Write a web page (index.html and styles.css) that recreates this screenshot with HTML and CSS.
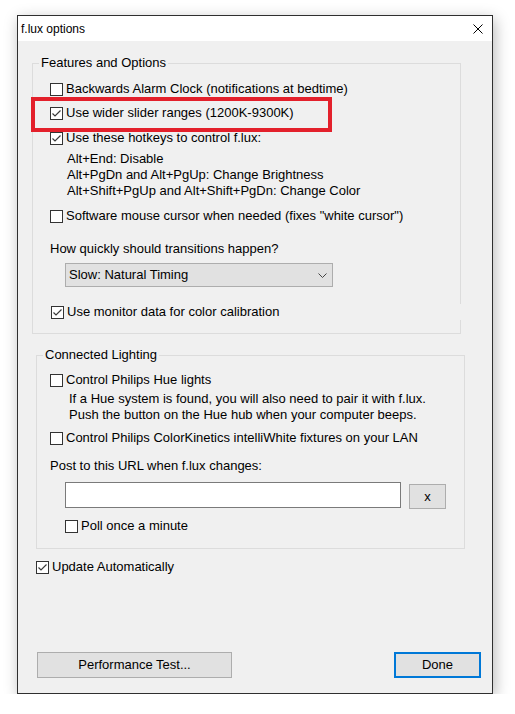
FILE: index.html
```html
<!DOCTYPE html>
<html lang="en">
<head>
    <meta charset="UTF-8">
    <meta name="viewport" content="width=device-width, initial-scale=1.0">
    <title>f.lux options</title>
    <link rel="stylesheet" href="styles.css">
</head>
<body>
    <div class="window">
        <div class="titlebar">
            <span class="title">f.lux options</span>
            <svg class="close" width="10" height="10" viewBox="0 0 10 10">
                <path d="M0.5 0.5 L9.5 9.5 M9.5 0.5 L0.5 9.5" stroke="#000" stroke-width="1" fill="none"/>
            </svg>
        </div>

        <div class="client">
            <!-- Features group -->
            <fieldset class="group group-features">
                <legend>Features and Options</legend>
                <div class="group-body features-body">
                    <label class="check row-alarm"><span class="box"></span>Backwards Alarm Clock (notifications at bedtime)</label>
                    <label class="check row-wider">
                        <span class="box"><svg viewBox="0 0 11 11"><path d="M1.5 5.5 L4 8 L9.5 2.5"/></svg></span>Use wider slider ranges (1200K-9300K)
                        <span class="highlight"></span>
                    </label>
                    <label class="check row-hotkeys"><span class="box"><svg viewBox="0 0 11 11"><path d="M1.5 5.5 L4 8 L9.5 2.5"/></svg></span>Use these hotkeys to control f.lux:</label>
                    <div class="hotkeys">
                        <div>Alt+End: Disable</div>
                        <div>Alt+PgDn and Alt+PgUp: Change Brightness</div>
                        <div>Alt+Shift+PgUp and Alt+Shift+PgDn: Change Color</div>
                    </div>
                    <label class="check row-cursor"><span class="box"></span>Software mouse cursor when needed (fixes "white cursor")</label>
                    <div class="caption row-speed">How quickly should transitions happen?</div>
                    <div class="select">
                        <span>Slow: Natural Timing</span>
                        <svg width="9" height="5" viewBox="0 0 9 5"><path d="M0.5 0.5 L4.5 4.5 L8.5 0.5" stroke="#444" stroke-width="1" fill="none"/></svg>
                    </div>
                    <label class="check row-monitor"><span class="box"><svg viewBox="0 0 11 11"><path d="M1.5 5.5 L4 8 L9.5 2.5"/></svg></span>Use monitor data for color calibration</label>
                </div>
            </fieldset>

            <!-- Lighting group -->
            <fieldset class="group group-lighting">
                <legend>Connected Lighting</legend>
                <div class="group-body lighting-body">
                    <label class="check"><span class="box"></span>Control Philips Hue lights</label>
                    <div class="hue-note">
                        <div>If a Hue system is found, you will also need to pair it with f.lux.</div>
                        <div>Push the button on the Hue hub when your computer beeps.</div>
                    </div>
                    <label class="check row-kinetics"><span class="box"></span>Control Philips ColorKinetics intelliWhite fixtures on your LAN</label>
                    <div class="caption row-url">Post to this URL when f.lux changes:</div>
                    <div class="url-row">
                        <div class="textbox"></div>
                        <div class="btn btn-clear">x</div>
                    </div>
                    <label class="check row-poll"><span class="box"></span>Poll once a minute</label>
                </div>
            </fieldset>

            <label class="check row-update"><span class="box"><svg viewBox="0 0 11 11"><path d="M1.5 5.5 L4 8 L9.5 2.5"/></svg></span>Update Automatically</label>

            <div class="footer">
                <div class="btn btn-perf">Performance Test...</div>
                <div class="btn btn-done">Done</div>
            </div>
        </div>
    </div>
</body>
</html>
```

FILE: styles.css
```css
body {
    margin: 0;
    background-color: #ffffff;
    font-family: 'Liberation Sans', Arial, sans-serif;
    font-size: 13px;
    line-height: 16px;
    color: #000000;
}
.window {
    margin: 15px 0 0 17px;
    width: 476px;
    height: 679px;
    box-sizing: border-box;
    border: 1px solid #2f2f2f;
    background-color: #f0f0f0;
    box-shadow: 2px 4px 14px rgba(0, 0, 0, 0.28);
    display: flex;
    flex-direction: column;
}
.titlebar {
    height: 25px;
    flex: none;
    background-color: #ffffff;
    display: flex;
    align-items: center;
    justify-content: space-between;
    padding: 0 9px 0 3px;
}
.title {
    font-size: 12px;
}
.client {
    flex: 1;
    display: flex;
    flex-direction: column;
    padding-bottom: 15px;
}
.group {
    margin: 0;
    padding: 0;
    min-width: 0;
    width: 429px;
    box-sizing: border-box;
    border: 1px solid #dcdcdc;
}
.group legend {
    margin-left: 6px;
    padding: 0 2px;
    line-height: 16px;
}
.group-features {
    margin: 14px 0 0 14px;
}
.group-lighting {
    margin: 13px 0 0 18px;
}
.features-body {
    padding: 10px 0 13px 17px;
}
.lighting-body {
    padding: 9px 0 14px 13px;
}
.check {
    display: flex;
    align-items: center;
    height: 16px;
    white-space: nowrap;
}
.box {
    width: 13px;
    height: 13px;
    box-sizing: border-box;
    border: 1px solid #333333;
    background-color: #ffffff;
    margin-right: 3px;
    flex: none;
    display: flex;
}
.box svg {
    width: 11px;
    height: 11px;
}
.box path {
    fill: none;
    stroke: #3a3a3a;
    stroke-width: 1.2;
}
.row-wider {
    margin-top: 8px;
    position: relative;
}
.highlight {
    position: absolute;
    left: -19px;
    top: -8px;
    width: 301px;
    height: 35px;
    box-sizing: border-box;
    border: 4px solid #e3202b;
}
.row-hotkeys {
    margin-top: 9px;
}
.hotkeys {
    margin: 5px 0 0 17px;
}
.row-cursor {
    margin-top: 9px;
}
.row-speed {
    margin-top: 17px;
}
.select {
    margin: 6px 0 0 15px;
    width: 268px;
    height: 24px;
    box-sizing: border-box;
    border: 1px solid #adadad;
    background-color: #e1e1e1;
    display: flex;
    align-items: center;
    justify-content: space-between;
    padding: 0 5px 0 3px;
}
.row-monitor {
    margin: 17px -3px 0 1px;
    background-color: #f0f0f0;
}
.hue-note {
    margin: 3px 0 0 19px;
}
.row-kinetics {
    margin-top: 7px;
}
.row-url {
    margin-top: 12px;
}
.url-row {
    display: flex;
    align-items: flex-start;
    margin: 8px 0 0 15px;
}
.textbox {
    width: 336px;
    height: 26px;
    box-sizing: border-box;
    border: 1px solid #7a7a7a;
    background-color: #ffffff;
}
.btn {
    box-sizing: border-box;
    border: 1px solid #adadad;
    background-color: #e1e1e1;
    display: flex;
    align-items: center;
    justify-content: center;
}
.btn-clear {
    width: 37px;
    height: 25px;
    margin: 2px 0 0 8px;
}
.row-poll {
    margin: 9px 0 0 15px;
}
.row-update {
    margin: 10px 0 0 18px;
}
.footer {
    margin-top: auto;
    display: flex;
    justify-content: space-between;
    padding: 0 11px 0 19px;
}
.btn-perf {
    width: 195px;
    height: 26px;
}
.btn-done {
    width: 87px;
    height: 26px;
    border: 2px solid #0078d7;
}
```
